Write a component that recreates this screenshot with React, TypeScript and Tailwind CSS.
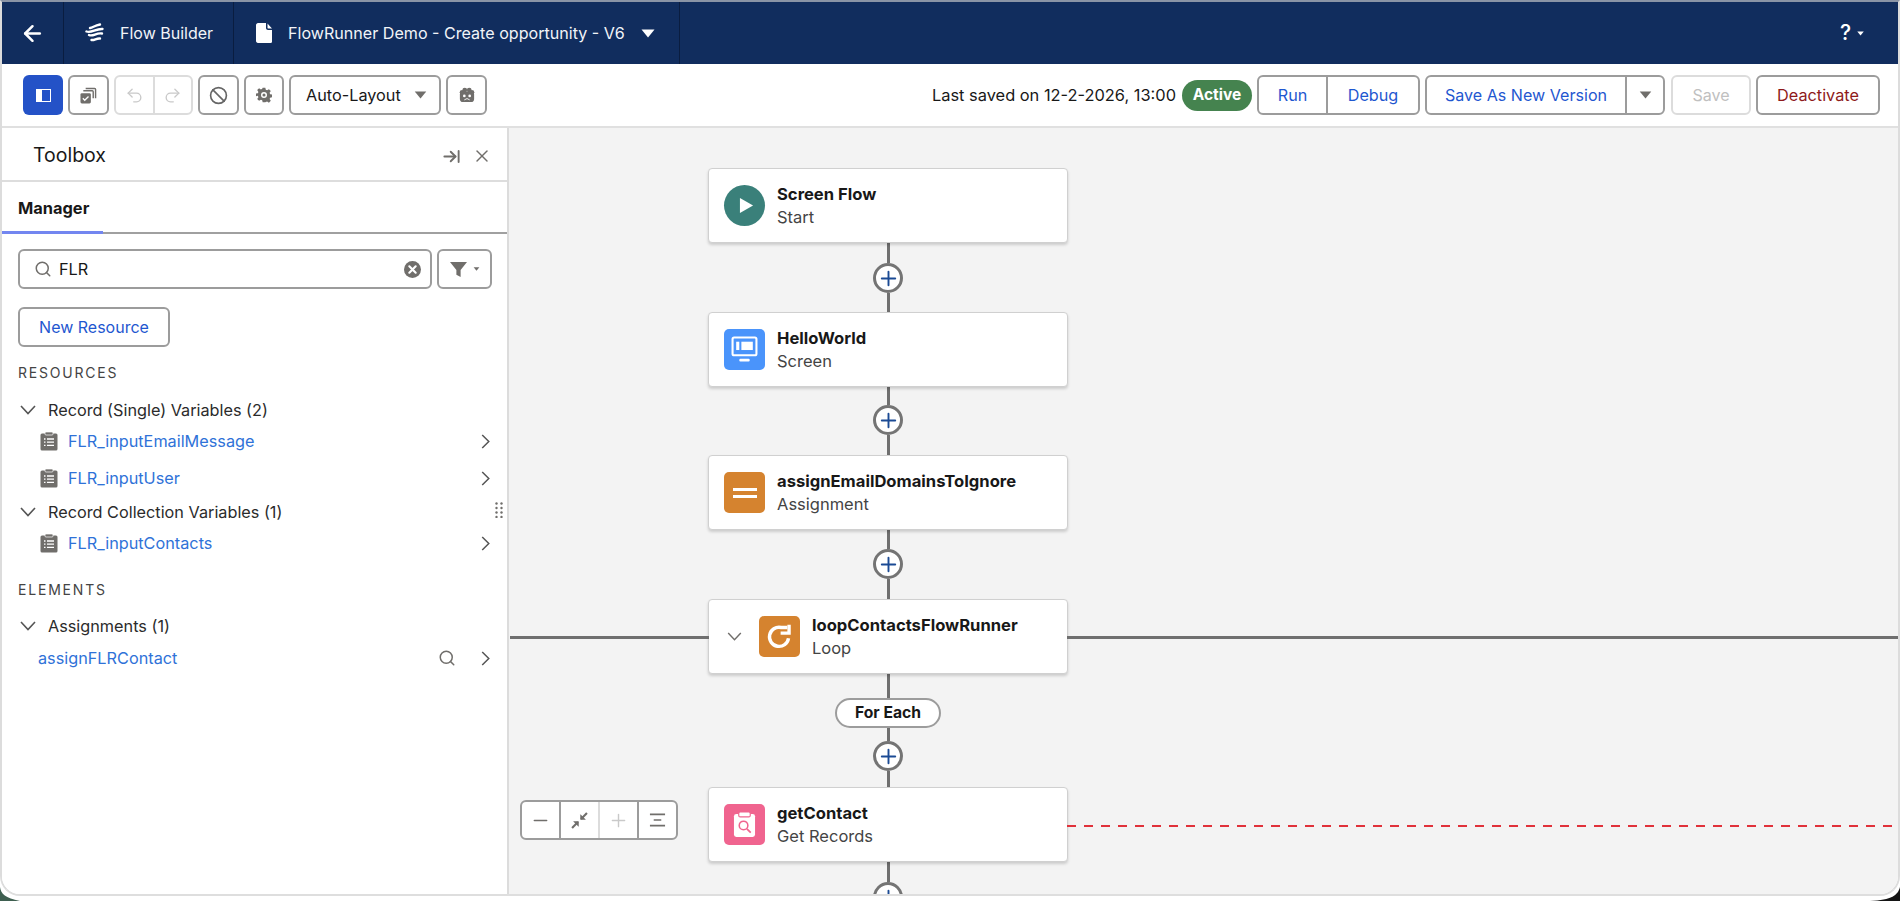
import React from "react";
import { ArrowLeft, Undo2, Redo2, Ban, ArrowRightToLine, X, Search, Plus, Minus } from "lucide-react";

const Caret = ({ className }: { className: string }) => (
  <svg viewBox="0 0 14 9" className={className} fill="currentColor"><path d="M0.5 0.5h13L7 8.5z" strokeLinejoin="round" /></svg>
);

const ChevronDownThin = ({ className = "w-[16px] h-[10px] text-[#555]" }: { className?: string }) => (
  <svg viewBox="0 0 16 10" className={className} fill="none" stroke="currentColor" strokeWidth="1.6"><path d="M1 1l7 7.5L15 1" /></svg>
);

const ChevronRightThin = () => (
  <svg viewBox="0 0 9 16" className="w-[9px] h-[15px] text-[#555] shrink-0" fill="none" stroke="currentColor" strokeWidth="1.6"><path d="M1 1l7 7-7 7" /></svg>
);

const ClipboardIcon = () => (
  <svg viewBox="0 0 18 20" className="w-[18px] h-[20px] shrink-0">
    <rect x="0.5" y="2.5" width="17" height="17" rx="1.5" fill="#706e6b" />
    <rect x="5" y="1" width="8" height="3" rx="1" fill="#706e6b" stroke="#fff" strokeWidth="0.7" />
    <path d="M4 8h1.5M7 8h7M4 11.2h1.5M7 11.2h7M4 14.4h1.5M7 14.4h7" stroke="#fff" strokeWidth="1.3" />
  </svg>
);

const ToolButton = ({ children, className = "w-[41px]" }: { children: React.ReactNode; className?: string }) => (
  <div className={`h-[40px] ${className} rounded-[6px] border-2 border-[#9c9c9c] bg-white flex items-center justify-center shrink-0`}>{children}</div>
);

const ResourceRow = ({ label, className }: { label: string; className: string }) => (
  <div className={`flex items-center pl-[38px] pr-[17px] ${className}`}>
    <ClipboardIcon />
    <span className="ml-[10px] flex-1 text-[16.25px] text-[#2f72d8]">{label}</span>
    <ChevronRightThin />
  </div>
);

const GroupRow = ({ label, className }: { label: string; className: string }) => (
  <div className={`flex items-center pl-[18px] ${className}`}>
    <ChevronDownThin />
    <span className="ml-[12px] text-[16.25px] text-[#2b2b2b]">{label}</span>
  </div>
);

const SectionLabel = ({ children, className }: { children: React.ReactNode; className: string }) => (
  <div className={`pl-[16px] h-[20px] flex items-center text-[14px] tracking-[1.8px] text-[#444] ${className}`}>{children}</div>
);

const Line = ({ className }: { className: string }) => <div className={`w-[3px] shrink-0 bg-[#6f6f6f] ${className}`} />;

const PlusNode = () => (
  <div className="w-[30px] h-[30px] rounded-full border-[3px] border-[#747474] bg-white flex items-center justify-center shrink-0">
    <Plus size={23} strokeWidth={2} className="text-[#1b4a94]" />
  </div>
);

const IconBox = ({ className, children }: { className: string; children: React.ReactNode }) => (
  <div className={`w-[41px] h-[41px] shrink-0 flex items-center justify-center ${className}`}>{children}</div>
);

const NodeCard = ({ icon, title, subtitle, lead, children }: { icon: React.ReactNode; title: string; subtitle: string; lead?: React.ReactNode; children?: React.ReactNode }) => (
  <div className="relative w-[360px] h-[75px] shrink-0 bg-white border border-[#d0d0d0] rounded-[4px] shadow-[0_2px_3px_rgba(0,0,0,0.16)] flex items-center pl-[15px]">
    {lead}
    {icon}
    <div className="ml-[12px] flex flex-col">
      <div className="text-[16.6px] leading-[23px] font-bold text-[#181818]">{title}</div>
      <div className="text-[16.5px] leading-[23px] text-[#444]">{subtitle}</div>
    </div>
    {children}
  </div>
);

export default function App() {
  return (
    <div className="relative w-full h-[901px] overflow-hidden bg-white font-['Inter','Liberation_Sans',sans-serif]">
      <svg viewBox="0 0 20 14" className="absolute left-0 bottom-0 w-[20px] h-[14px]"><path d="M0 0C1 7 5 11 20 14H0z" fill="#3e5f50" /></svg>
      <svg viewBox="0 0 30 14" className="absolute right-0 bottom-0 w-[30px] h-[14px]"><path d="M30 0C28 8 22 13 0 14H30z" fill="#141414" /></svg>

      <div className="relative h-[896px] flex flex-col overflow-hidden border-t-2 border-t-[#8a94a6] border-l-2 border-l-[#dcdcdc] border-r-2 border-r-[#dcdcdc] border-b-2 border-b-[#dedede] rounded-b-[20px] bg-white">
        {/* Global bar */}
        <header className="h-[62px] shrink-0 bg-[#112d5e] text-white flex items-center">
          <div className="w-[62px] h-full border-r border-[#0a1d40] flex items-center justify-center">
            <ArrowLeft size={25} strokeWidth={2.4} />
          </div>
          <div className="w-[170px] h-full border-r border-[#0a1d40] flex items-center pl-[21px]">
            <svg viewBox="0 0 20 20" className="w-[20px] h-[20px]" fill="none" stroke="#fff" strokeWidth="2.4" strokeLinecap="round">
              <path d="M5 5c3-.5 4.500-2.500 10-3.500" />
              <path d="M1.500 8.500c5 2 9-3 16-2.500" />
              <path d="M4 12c4 2 7-2.500 13-1.500" />
              <path d="M6.500 17c3 .5 5-2 8.500-1.500" />
            </svg>
            <span className="ml-[15px] text-[16px] text-[#f2f4f8]">Flow Builder</span>
          </div>
          <div className="w-[446px] h-full border-r border-[#0a1d40] flex items-center pl-[22px]">
            <svg viewBox="0 0 16 20" className="w-[16px] h-[20px]" fill="#fff"><path d="M2 0h8v5c0 1 1 2 2 2h4v11.500c0 1-.8 1.500-1.500 1.500h-12C1.500 20 0 19.500 0 18V2C0 1 1 0 2 0zM11.500 .5L16 5.500h-4c-.3 0-.5-.2-.5-.5z" /></svg>
            <span className="ml-[16px] text-[16.1px] text-[#f2f4f8] whitespace-nowrap">FlowRunner Demo - Create opportunity - V6</span>
            <Caret className="ml-[16px] w-[14px] h-[9px] text-white" />
          </div>
          <div className="flex-1 flex items-center justify-end pr-[34px]">
            <span className="text-[21px] font-medium">?</span>
            <Caret className="ml-[6px] w-[7px] h-[5px] text-white" />
          </div>
        </header>

        {/* Toolbar */}
        <div className="h-[64px] shrink-0 flex items-center border-b-2 border-[#e0e0e0] pl-[21px] pr-[18px]">
          <div className="flex items-center gap-[5px]">
            <div className="w-[40px] h-[40px] rounded-[6px] bg-[#2452c7] flex items-center justify-center">
              <div className="w-[15px] h-[13px] border-[1.5px] border-white flex"><div className="w-[5px] bg-white" /></div>
            </div>
            <ToolButton>
              <svg viewBox="0 0 18 18" className="w-[17px] h-[17px]">
                <path d="M6 1.500h9.500c.6 0 1 .4 1 1V12" fill="none" stroke="#706e6b" strokeWidth="1.500" />
                <path d="M3.500 4h9.500c.6 0 1 .4 1 1v7" fill="none" stroke="#706e6b" strokeWidth="1.500" />
                <rect x="0.500" y="6.500" width="11" height="11" rx="1.500" fill="#706e6b" />
                <path d="M3 12l2 2 4-4" fill="none" stroke="#fff" strokeWidth="1.400" />
              </svg>
            </ToolButton>
            <div className="w-[79px] h-[40px] rounded-[6px] border-2 border-[#dcdcdc] flex">
              <div className="flex-1 border-r-2 border-[#dcdcdc] flex items-center justify-center"><Undo2 size={19} strokeWidth={1.7} className="text-[#c9c9c9]" /></div>
              <div className="flex-1 flex items-center justify-center"><Redo2 size={19} strokeWidth={1.7} className="text-[#c9c9c9]" /></div>
            </div>
            <ToolButton><Ban size={19} strokeWidth={2.1} className="text-[#666]" /></ToolButton>
            <ToolButton className="w-[40px]">
              <svg viewBox="0 0 24 24" className="w-[16px] h-[16px]" fill="#706e6b" fillRule="evenodd">
                <path d="M10 1h4l.7 3.200 1.900.8 2.800-1.800 2.800 2.800-1.800 2.800.8 1.900 3.200.7v4l-3.200.7-.8 1.900 1.800 2.800-2.800 2.800-2.800-1.800-1.900.8L14 23h-4l-.7-3.200-1.900-.8-2.800 1.800-2.800-2.800 1.800-2.800-.8-1.900L-.4 14v-4l3.200-.7.8-1.900-1.800-2.800 2.800-2.800 2.800 1.800 1.900-.8zM12 7.500a4.500 4.500 0 1 0 0 9 4.500 4.500 0 0 0 0-9z" />
                <circle cx="12" cy="12" r="2.300" />
              </svg>
            </ToolButton>
            <div className="w-[152px] h-[40px] rounded-[6px] border-2 border-[#9c9c9c] flex items-center pl-[15px] pr-[12px]">
              <span className="flex-1 text-[16.25px] text-[#181818]">Auto-Layout</span>
              <Caret className="w-[13px] h-[8px] text-[#706e6b]" />
            </div>
            <ToolButton>
              <svg viewBox="0 0 20 18" className="w-[18px] h-[16px]" fill="#706e6b">
                <circle cx="4.500" cy="6" r="2.700" /><circle cx="7.500" cy="3.500" r="2.700" /><circle cx="12.500" cy="3.500" r="2.700" /><circle cx="15.500" cy="6" r="2.700" />
                <rect x="2" y="5" width="16" height="12" rx="3.500" />
                <circle cx="7" cy="10" r="1.500" fill="#fff" />
                <circle cx="13" cy="10" r="1.500" fill="#fff" />
                <path d="M7 14.500l3-1.500 3 1.500" stroke="#fff" strokeWidth="1" fill="none" />
              </svg>
            </ToolButton>
          </div>
          <div className="flex-1" />
          <span className="text-[16.4px] text-[#181818] whitespace-nowrap">Last saved on 12-2-2026, 13:00</span>
          <span className="ml-[6px] w-[70px] h-[31px] rounded-full bg-[#45834f] text-white text-[15.5px] font-bold flex items-center justify-center">Active</span>
          <div className="ml-[5px] w-[163px] h-[40px] rounded-[6px] border-2 border-[#9c9c9c] flex text-[16.2px] text-[#1f57d0]">
            <div className="w-[69px] border-r-2 border-[#9c9c9c] flex items-center justify-center">Run</div>
            <div className="flex-1 flex items-center justify-center">Debug</div>
          </div>
          <div className="ml-[5px] w-[240px] h-[40px] rounded-[6px] border-2 border-[#9c9c9c] flex text-[16.1px] text-[#1f57d0]">
            <div className="w-[200px] border-r-2 border-[#9c9c9c] flex items-center justify-center">Save As New Version</div>
            <div className="flex-1 flex items-center justify-center"><Caret className="w-[13px] h-[8px] text-[#706e6b]" /></div>
          </div>
          <div className="ml-[6px] w-[80px] h-[40px] rounded-[6px] border-2 border-[#dcdcdc] flex items-center justify-center text-[16.1px] text-[#c0c0c0]">Save</div>
          <div className="ml-[5px] w-[124px] h-[40px] rounded-[6px] border-2 border-[#9c9c9c] flex items-center justify-center text-[16.3px] text-[#8e1a1a]">Deactivate</div>
        </div>

        {/* Body */}
        <div className="flex-1 flex min-h-0">
          {/* Toolbox */}
          <aside className="relative w-[507px] shrink-0 bg-white border-r-2 border-[#dcdcdc] flex flex-col">
            <div className="h-[54px] shrink-0 border-b-2 border-[#dddddd] flex items-center pt-[4px] pl-[31px] pr-[15px]">
              <span className="flex-1 text-[19.5px] text-[#181818]">Toolbox</span>
              <ArrowRightToLine size={19} strokeWidth={2.4} className="text-[#706e6b]" />
              <X size={20} strokeWidth={1.7} className="ml-[11px] text-[#706e6b]" />
            </div>
            <div className="h-[52px] shrink-0 border-b-2 border-[#a0a0a0] relative flex items-center pt-[3px] pl-[16px]">
              <span className="text-[16.4px] font-bold text-[#181818]">Manager</span>
              <div className="absolute left-0 bottom-[-2px] w-[101px] h-[3px] bg-[#7386f0]" />
            </div>
            <div className="flex items-center gap-[5px] pl-[16px] mt-[15px]">
              <div className="w-[414px] h-[40px] rounded-[6px] border-2 border-[#9c9c9c] flex items-center pl-[14px] pr-[9px]">
                <Search size={18} strokeWidth={2} className="text-[#706e6b]" />
                <span className="ml-[7px] flex-1 text-[16.25px] text-[#181818]">FLR</span>
                <svg viewBox="0 0 16 16" className="w-[17px] h-[17px]">
                  <circle cx="8" cy="8" r="8" fill="#706e6b" />
                  <path d="M5 5l6 6M11 5l-6 6" stroke="#fff" strokeWidth="2" strokeLinecap="round" />
                </svg>
              </div>
              <div className="w-[55px] h-[40px] rounded-[6px] border-2 border-[#9c9c9c] flex items-center justify-center">
                <svg viewBox="0 0 16 16" className="w-[17px] h-[17px]" fill="#706e6b"><path d="M0 1h16L10 8.500V15l-4-2V8.500z" /></svg>
                <Caret className="ml-[6px] w-[7px] h-[4px] text-[#706e6b]" />
              </div>
            </div>
            <div className="ml-[16px] mt-[18px] w-[152px] h-[40px] rounded-[6px] border-2 border-[#9c9c9c] flex items-center justify-center text-[16px] text-[#1f57d0]">New Resource</div>
            <SectionLabel className="mt-[15px]">RESOURCES</SectionLabel>
            <GroupRow label="Record (Single) Variables (2)" className="mt-[13px] h-[30px]" />
            <ResourceRow label="FLR_inputEmailMessage" className="h-[32px]" />
            <ResourceRow label="FLR_inputUser" className="mt-[3px] h-[36px]" />
            <GroupRow label="Record Collection Variables (1)" className="h-[32px]" />
            <ResourceRow label="FLR_inputContacts" className="h-[30px]" />
            <SectionLabel className="mt-[21px]">ELEMENTS</SectionLabel>
            <GroupRow label="Assignments (1)" className="mt-[12px] h-[30px]" />
            <div className="mt-[2px] h-[30px] flex items-center pl-[36px] pr-[17px]">
              <span className="flex-1 text-[16.25px] text-[#2f72d8]">assignFLRContact</span>
              <Search size={18} strokeWidth={2} className="text-[#706e6b]" />
              <div className="ml-[25px] flex"><ChevronRightThin /></div>
            </div>
            <svg viewBox="0 0 8 16" className="absolute left-[493px] top-[374px] w-[8px] h-[16px]" fill="#706e6b">
              <circle cx="1.500" cy="1.500" r="1.200" /><circle cx="6.500" cy="1.500" r="1.200" />
              <circle cx="1.500" cy="6" r="1.200" /><circle cx="6.500" cy="6" r="1.200" />
              <circle cx="1.500" cy="10.500" r="1.200" /><circle cx="6.500" cy="10.500" r="1.200" />
              <circle cx="1.500" cy="15" r="1.200" /><circle cx="6.500" cy="15" r="1.200" />
            </svg>
          </aside>

          {/* Canvas */}
          <main className="relative flex-1 bg-[#f3f3f3] overflow-hidden">
            <div className="ml-[199px] w-[360px] pt-[40px] flex flex-col items-center">
              <NodeCard title="Screen Flow" subtitle="Start" icon={
                <IconBox className="rounded-full bg-[#3a807a]">
                  <svg viewBox="0 0 16 18" className="w-[15px] h-[19px] ml-[3px]" fill="#fff"><path d="M1 1l14 8-14 8z" strokeLinejoin="round" /></svg>
                </IconBox>
              } />
              <Line className="h-[20px]" />
              <PlusNode />
              <Line className="h-[19px]" />
              <NodeCard title="HelloWorld" subtitle="Screen" icon={
                <IconBox className="rounded-[5px] bg-[#4a94fb]">
                  <svg viewBox="0 0 26 26" className="w-[27px] h-[27px]">
                    <rect x="1.500" y="1.500" width="23" height="17" rx="1.500" fill="none" stroke="#fff" strokeWidth="2" />
                    <rect x="5" y="5.500" width="3" height="8" fill="#fff" />
                    <rect x="10" y="5.500" width="11" height="8" fill="#fff" />
                    <rect x="8" y="22" width="10" height="2.500" rx="1" fill="#fff" />
                  </svg>
                </IconBox>
              } />
              <Line className="h-[18px]" />
              <PlusNode />
              <Line className="h-[20px]" />
              <NodeCard title="assignEmailDomainsToIgnore" subtitle="Assignment" icon={
                <IconBox className="rounded-[5px] bg-[#d5832f]">
                  <div className="w-[24px] h-[10px] border-y-[3px] border-white" />
                </IconBox>
              } />
              <Line className="h-[19px]" />
              <PlusNode />
              <Line className="h-[20px]" />
              <NodeCard
                title="loopContactsFlowRunner"
                subtitle="Loop"
                lead={<ChevronDownThin className="ml-[3px] mr-[17px] w-[15px] h-[9px] text-[#706e6b]" />}
                icon={
                  <IconBox className="rounded-[5px] bg-[#d5832f]">
                    <svg viewBox="0 0 24 24" className="w-[27px] h-[27px]" fill="none" stroke="#fff" strokeWidth="3">
                      <path d="M20 13.500A8.500 8.500 0 1 1 13.500 4H19" />
                      <path d="M20.500 1.500V9H13" strokeWidth="3" />
                    </svg>
                  </IconBox>
                }
              >
                <div className="absolute right-full top-[36px] w-[199px] h-[3px] bg-[#6f6f6f]" />
                <div className="absolute left-full top-[36px] w-[840px] h-[3px] bg-[#6f6f6f]" />
              </NodeCard>
              <Line className="h-[24px]" />
              <div className="w-[106px] h-[30px] shrink-0 rounded-full border-2 border-[#9c9c9c] bg-white flex items-center justify-center text-[15.7px] font-bold text-[#181818]">For Each</div>
              <Line className="h-[13px]" />
              <PlusNode />
              <Line className="h-[16px]" />
              <NodeCard title="getContact" subtitle="Get Records" icon={
                <IconBox className="rounded-[5px] bg-[#f0648f]">
                  <svg viewBox="0 0 24 28" className="w-[23px] h-[27px]">
                    <rect x="1" y="3" width="22" height="24" rx="2.500" fill="#fff" />
                    <rect x="6" y="1" width="12" height="5" rx="1.500" fill="#fff" stroke="#f0648f" strokeWidth="1.200" />
                    <circle cx="11" cy="15" r="4.500" fill="none" stroke="#f0648f" strokeWidth="1.600" />
                    <path d="M14.500 18.500l4 4" stroke="#f0648f" strokeWidth="1.800" />
                  </svg>
                </IconBox>
              }>
                <div className="absolute left-full top-[37px] w-[840px] h-[2px] bg-[repeating-linear-gradient(90deg,#e0313a_0,#e0313a_9px,transparent_9px,transparent_17px)]" />
              </NodeCard>
              <Line className="h-[20px]" />
              <PlusNode />
            </div>

            {/* Zoom controls */}
            <div className="absolute left-[11px] top-[672px] w-[158px] h-[40px] rounded-[6px] border-2 border-[#9c9c9c] bg-white flex">
              <div className="flex-1 flex items-center justify-center border-r-2 border-[#9c9c9c]"><Minus size={21} strokeWidth={1.8} className="text-[#706e6b]" /></div>
              <div className="flex-1 flex items-center justify-center">
                <svg viewBox="0 0 16 16" className="w-[17px] h-[17px]" fill="none" stroke="#706e6b" strokeWidth="2">
                  <path d="M15 1L9.500 6.500" /><path d="M9 2.500v4.500h4.500z" fill="#706e6b" strokeWidth="0.500" />
                  <path d="M1 15l5.500-5.500" /><path d="M7 13.500V9H2.500z" fill="#706e6b" strokeWidth="0.500" />
                </svg>
              </div>
              <div className="flex-1 flex items-center justify-center border-l-2 border-r-2 border-l-[#dcdcdc] border-r-[#9c9c9c]"><Plus size={21} strokeWidth={1.6} className="text-[#c9c9c9]" /></div>
              <div className="flex-1 flex items-center justify-center">
                <svg viewBox="0 0 18 14" className="w-[17px] h-[14px]" stroke="#706e6b" strokeWidth="1.800"><path d="M1 1h16M5 7h8M1 13h16" /></svg>
              </div>
            </div>
          </main>
        </div>
      </div>
    </div>
  );
}
